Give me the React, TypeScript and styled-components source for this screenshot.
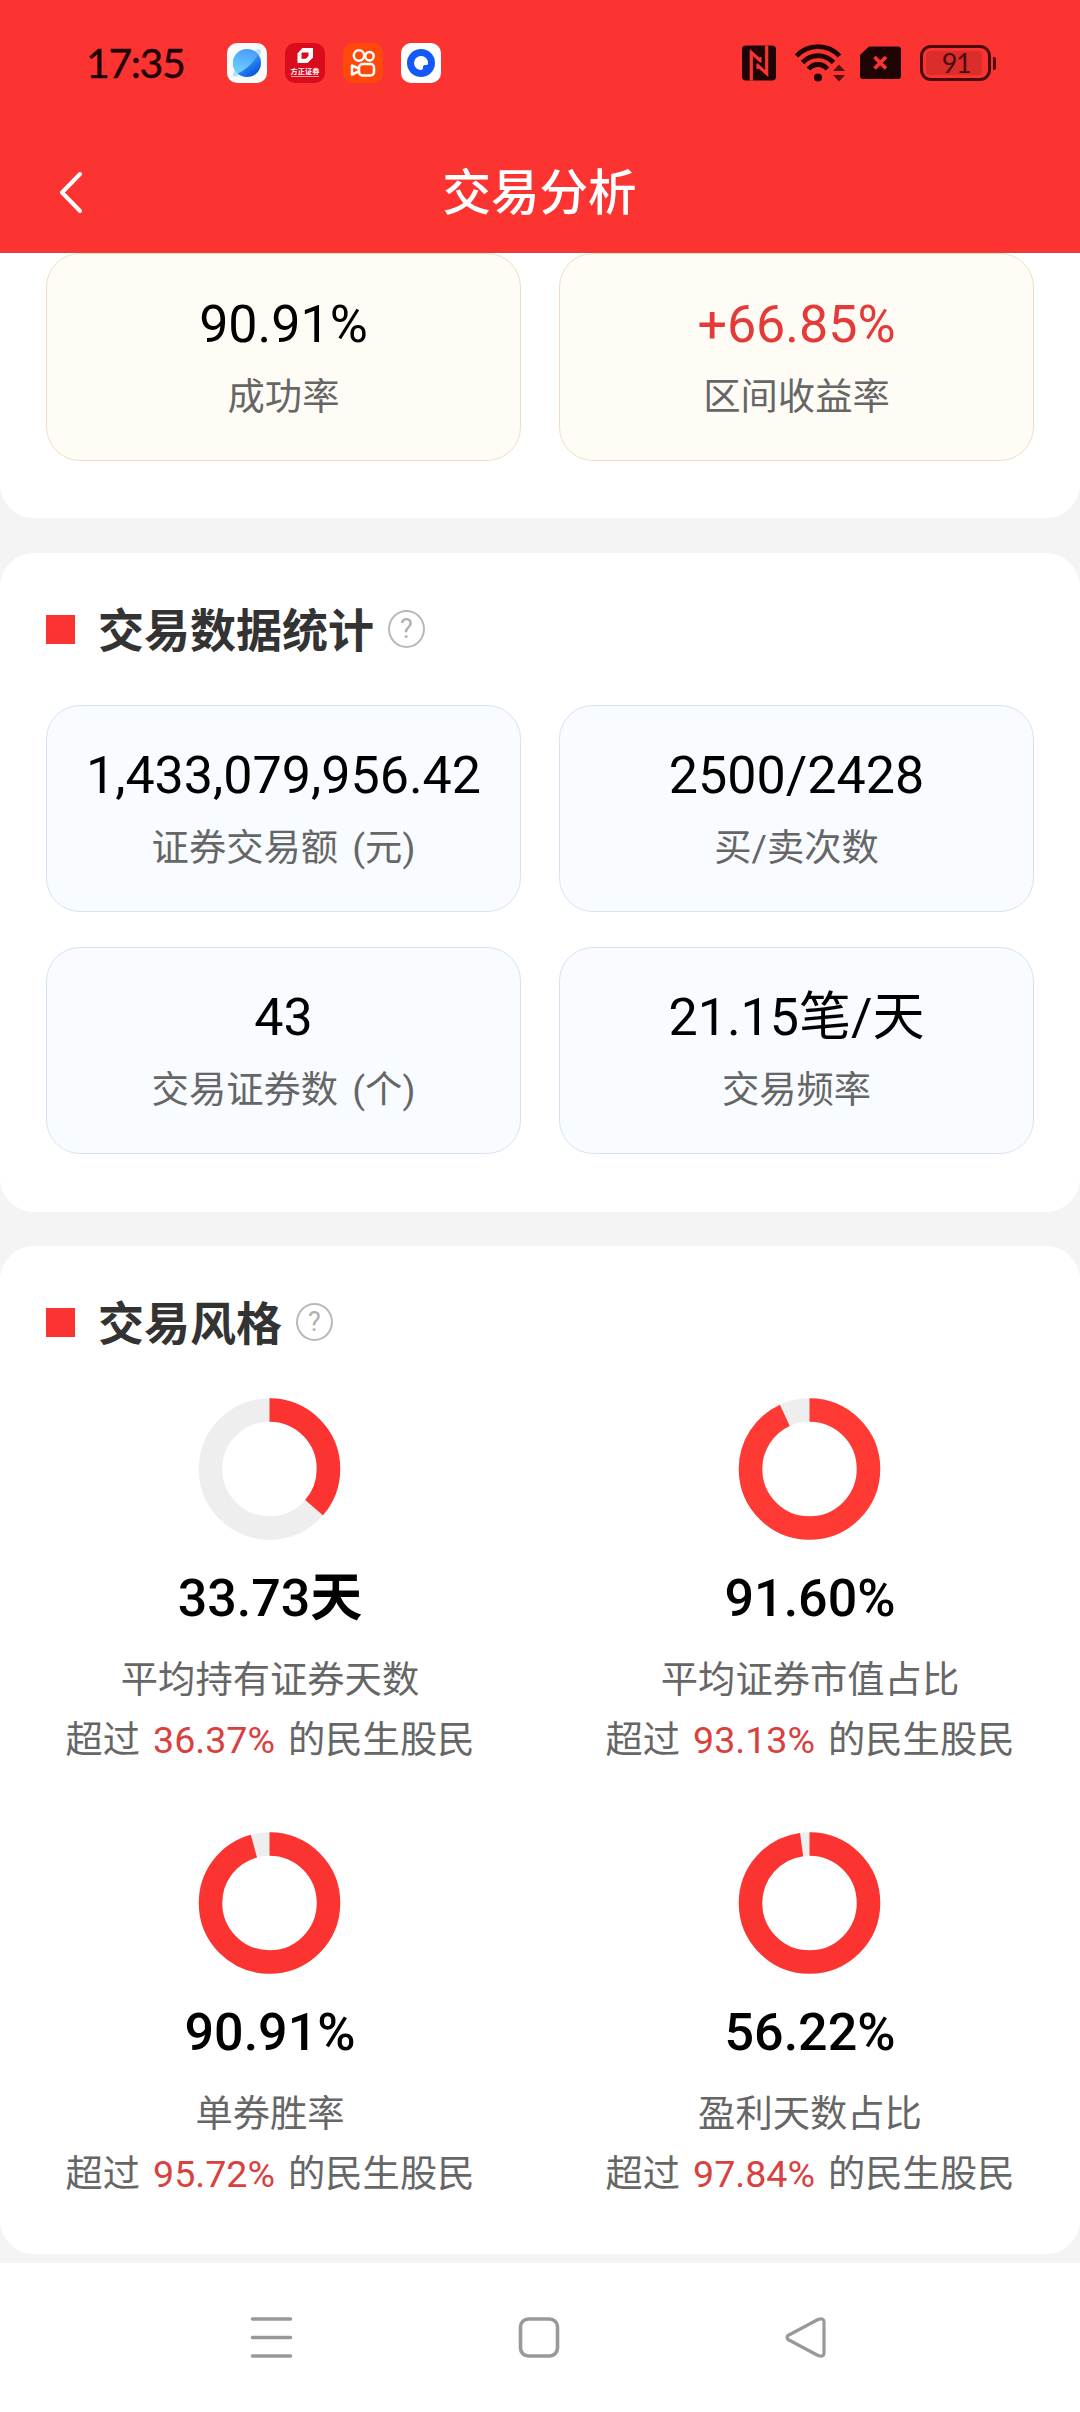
import React from "react";
import styled, { createGlobalStyle } from "styled-components";

const RED = "#fc3431";
const INK = "#1f0405";
const SANS = '"Roboto", "Noto Sans CJK SC", sans-serif';

const GlobalStyle = createGlobalStyle`
  * { box-sizing: border-box; }
  body { margin: 0; background: #f4f4f4; }
`;

const Screen = styled.div`
  width: 1080px;
  height: 2412px;
  overflow: hidden;
  display: flex;
  flex-direction: column;
  background: #f4f4f4;
  font-family: ${SANS};
  color: #000;
`;

const TopArea = styled.header`
  flex: none;
  height: 253px;
  background: ${RED};
  border-bottom: 1px solid #d8453f;
`;

const StatusBar = styled.div`
  height: 126px;
  padding: 0 84px 0 86px;
  display: flex;
  align-items: center;
  justify-content: space-between;
`;

const StatusGroup = styled.div<{ $gap: number }>`
  display: flex;
  align-items: center;
  gap: ${(p) => p.$gap}px;
`;

const Clock = styled.span`
  width: 123px;
  font-family: "Lato", "Noto Sans CJK SC", sans-serif;
  font-size: 41px;
  line-height: 48px;
  letter-spacing: -1.4px;
  white-space: nowrap;
  color: ${INK};
  -webkit-text-stroke: 0.4px ${INK};
`;

const AppIcon = styled.div<{ $bg: string }>`
  width: 40px;
  height: 40px;
  border-radius: 10px;
  overflow: hidden;
  background: ${(p) => p.$bg};
  display: flex;
  flex-direction: column;
  align-items: center;

  svg { display: block; flex: none; }
`;

const BrandText = styled.span`
  height: 9px;
  font-size: 7.2px;
  line-height: 9px;
  font-weight: 700;
  color: #fff;
  white-space: nowrap;
`;

const BrandLine = styled.span`
  width: 28px;
  height: 1px;
  background: #ee9a9f;
`;

const Glyph = styled.svg`
  display: block;
  flex: none;
  overflow: visible;
`;

const Battery = styled.div`
  display: flex;
  align-items: center;
  gap: 2px;
`;

const BatteryShell = styled.div`
  width: 71px;
  height: 36px;
  padding: 3px;
  border: 3px solid #470b0c;
  border-radius: 11px;
`;

const BatteryFill = styled.div`
  width: 56px;
  height: 24px;
  border-radius: 4px;
  background: #db2d2c;
  text-align: center;
  padding-left: 4px;
  font-family: "Lato", sans-serif;
  font-size: 27px;
  line-height: 24px;
  letter-spacing: -1.4px;
  color: #4a0b0c;
`;

const BatteryTip = styled.div`
  width: 3px;
  height: 13px;
  border-radius: 0 2px 2px 0;
  background: #470b0c;
`;

const NavBar = styled.div`
  height: 126px;
  display: grid;
  grid-template-columns: 140px 1fr 140px;
  align-items: center;
`;

const BackButton = styled.button`
  height: 80px;
  padding: 6px 0 0 57px;
  border: 0;
  background: none;
`;

const PageTitle = styled.h1`
  margin: 0;
  font-size: 48.5px;
  line-height: 64px;
  font-weight: 500;
  text-align: center;
  color: #fff;
  padding: 9px 1px 0 0;
`;

const Content = styled.main`
  flex: 1;
  min-height: 0;
  display: flex;
  flex-direction: column;
`;

const Panel = styled.section<{ $height: number; $first?: boolean; $gap: number }>`
  flex: none;
  height: ${(p) => p.$height}px;
  margin-bottom: ${(p) => p.$gap}px;
  padding: 0 46px;
  background: #fff;
  border-radius: ${(p) => (p.$first ? "0 0 34px 34px" : "34px")};
`;

const PanelHead = styled.div`
  height: 152px;
  display: flex;
  align-items: center;
`;

const Marker = styled.span`
  width: 29px;
  height: 29px;
  background: ${RED};
`;

const PanelTitle = styled.h2`
  margin: 4px 0 0 23px;
  font-size: 46px;
  line-height: 60px;
  font-weight: 700;
  color: #333;
`;

const HelpIcon = styled.button`
  width: 37px;
  height: 38px;
  margin-left: 14px;
  padding: 0;
  border: 2px solid #b9b9b9;
  border-radius: 50%;
  background: none;
  font-family: "Roboto", sans-serif;
  font-size: 27px;
  line-height: 34px;
  text-align: center;
  color: #b0b0b0;
`;

const StatGrid = styled.div`
  display: grid;
  grid-template-columns: 475px 475px;
  column-gap: 38px;
  row-gap: 35px;
`;

type Tone = "warm" | "cool";

const StatCard = styled.div<{ $tone: Tone }>`
  height: ${(p) => (p.$tone === "warm" ? 208 : 207)}px;
  padding-top: ${(p) => (p.$tone === "warm" ? 41 : 40)}px;
  border: 1px solid ${(p) => (p.$tone === "warm" ? "#f1dfc2" : "#d9e3ef")};
  border-radius: 34px;
  background: ${(p) => (p.$tone === "warm" ? "#fffcf6" : "#f8fbff")};
  text-align: center;
`;

const StatValue = styled.div<{ $accent?: boolean }>`
  font-size: 52px;
  line-height: 60px;
  white-space: nowrap;
  color: ${(p) => (p.$accent ? "#e33b39" : "#000")};
`;

const StatLabel = styled.div`
  margin-top: 18px;
  font-size: 37.3px;
  line-height: 48px;
  word-spacing: 5px;
  white-space: nowrap;
  color: #666;
`;

const StyleGrid = styled.div`
  margin: 0 -46px;
  display: grid;
  grid-template-columns: 1fr 1fr;
  grid-auto-rows: 434px;
`;

const StyleItem = styled.div`
  display: flex;
  flex-direction: column;
  align-items: center;
`;

const StyleValue = styled.div`
  margin-top: 29px;
  font-size: 52px;
  line-height: 60px;
  font-weight: 500;
`;

const StyleUnit = styled.span`
  font-weight: 700;
`;

const StyleLabel = styled.div`
  margin-top: 27px;
  font-size: 37.3px;
  line-height: 48px;
  color: #666;
`;

const Compare = styled.div`
  margin-top: 12px;
  display: flex;
  gap: 13px;
  font-size: 37.3px;
  line-height: 48px;
  color: #666;
`;

const Percent = styled.span`
  font-size: 37.6px;
  color: #d9413e;
`;

const SystemNav = styled.nav`
  flex: none;
  height: 149px;
  padding: 0 250px 0 251px;
  display: flex;
  align-items: center;
  justify-content: space-between;
  background: #fff;
`;

interface Stat {
  value: string;
  label: string;
  accent?: boolean;
}

const summary: Stat[] = [
  { value: "90.91%", label: "成功率" },
  { value: "+66.85%", label: "区间收益率", accent: true },
];

const tradeStats: Stat[] = [
  { value: "1,433,079,956.42", label: "证券交易额 (元)" },
  { value: "2500/2428", label: "买/卖次数" },
  { value: "43", label: "交易证券数 (个)" },
  { value: "21.15笔/天", label: "交易频率" },
];

const styles = [
  { value: "33.73", unit: "天", label: "平均持有证券天数", percent: 36.37, color: RED },
  { value: "91.60%", label: "平均证券市值占比", percent: 93.13, color: "#ff3a35" },
  { value: "90.91%", label: "单券胜率", percent: 95.72, color: RED },
  { value: "56.22%", label: "盈利天数占比", percent: 97.84, color: RED },
];

function Donut({ percent, color }: { percent: number; color: string }) {
  return (
    <Glyph width="142" height="142" viewBox="0 0 142 142">
      <g fill="none" strokeWidth="23.5" transform="rotate(-90 71 71)">
        <circle cx="71" cy="70.500" r="59" stroke="#eee" />
        <circle
          cx="71"
          cy="70.500"
          r="59"
          stroke={color}
          pathLength="100"
          strokeDasharray={`${percent} 100`}
        />
      </g>
    </Glyph>
  );
}

function Stats({ items, tone }: { items: Stat[]; tone: Tone }) {
  return (
    <StatGrid>
      {items.map((s) => (
        <StatCard key={s.label} $tone={tone}>
          <StatValue $accent={s.accent}>{s.value}</StatValue>
          <StatLabel>{s.label}</StatLabel>
        </StatCard>
      ))}
    </StatGrid>
  );
}

function Heading({ title }: { title: string }) {
  return (
    <PanelHead>
      <Marker />
      <PanelTitle>{title}</PanelTitle>
      <HelpIcon>?</HelpIcon>
    </PanelHead>
  );
}

function StatusIcons() {
  return (
    <StatusGroup $gap={18}>
      <AppIcon $bg="#f8fafc">
        <svg width="40" height="40" viewBox="0 0 40 40">
          <defs>
            <linearGradient id="planet" x1="0.2" y1="0.1" x2="0.8" y2="0.9">
              <stop offset="0" stopColor="#4aa5fb" />
              <stop offset="0.5" stopColor="#2f8cf8" />
              <stop offset="1" stopColor="#0a55e0" />
            </linearGradient>
            <linearGradient id="shine" x1="0.6" y1="0" x2="0.3" y2="1">
              <stop offset="0" stopColor="#4b9df8" />
              <stop offset="1" stopColor="#6ed2ff" />
            </linearGradient>
          </defs>
          <path d="M27 8C32 5 35 6 33.500 10C30 18 17 31 9 33.500C5 34.500 5 31 8 27Z" fill="#b5e3fd" />
          <circle cx="20" cy="20" r="14" fill="url(#planet)" />
          <path d="M31 11.500A14 14 0 1 0 10.500 30.500C19 27 27 19 31 11.500Z" fill="url(#shine)" />
        </svg>
      </AppIcon>
      <AppIcon $bg="#d90b1c">
        <svg width="40" height="24" viewBox="0 0 40 24">
          <path d="M17.500 5H28V14.500L22.500 20H12.500V10.500Z" fill="#fff" />
          <path d="M17 9.500H23.500V13L21 15.800H16.500V10.500Z" fill="#d90b1c" />
        </svg>
        <BrandText>方正证券</BrandText>
        <BrandLine />
      </AppIcon>
      <AppIcon $bg="#ff490b">
        <svg width="40" height="40" viewBox="0 0 40 40" fill="none" stroke="#fff" strokeWidth="2.500">
          <circle cx="16" cy="12.500" r="5.200" />
          <circle cx="26.500" cy="13.200" r="4.200" />
          <rect x="16" y="21" width="15" height="11.500" rx="3.500" />
          <path d="M15.500 25.500L9 22.500V31.500L15.500 28.500" strokeLinejoin="round" />
        </svg>
      </AppIcon>
      <AppIcon $bg="#fff">
        <svg width="40" height="40" viewBox="0 0 40 40">
          <circle cx="20" cy="20" r="14" fill="#1458fa" />
          <path d="M27 20.500A7 7 0 1 0 20.500 27A2 2 0 0 0 22 25V23.500A2 2 0 0 1 24 22H25.500Q27 22 27 20.500Z" fill="#fff" />
        </svg>
      </AppIcon>
    </StatusGroup>
  );
}

function SystemIcons() {
  return (
    <StatusGroup $gap={19}>
      <Glyph width="34" height="36" viewBox="0 0 34 36">
        <rect x="0" y="0.500" width="34" height="35" rx="4" fill={INK} />
        <path d="M9.300 35.500V7.500L18.500 15.700M24.700 0.500V28.500L15.500 20.300" fill="none" stroke={RED} strokeWidth="3.200" />
        <path d="M18.500 12V17.500M15.500 18.500V24" stroke={RED} strokeWidth="2" />
      </Glyph>
      <Glyph width="46" height="40" viewBox="0 0 46 40">
        <g fill="none" stroke={INK} strokeWidth="4.800">
          <path d="M1.500 13C13 0.500 33 0.500 44.500 13" />
          <path d="M7.500 19.500C16 10.500 30 10.500 38.500 19.500" />
          <path d="M13.500 26C19 20 27 20 32.500 26" />
        </g>
        <circle cx="23" cy="34.500" r="4" fill={INK} />
        <path d="M38 28L44 21.500L50 28ZM38 32L44 38.500L50 32Z" fill="#57100f" />
      </Glyph>
      <Glyph width="41" height="34" viewBox="0 0 41 34">
        <path d="M9 0.500H38Q41 0.500 41 3.500V30Q41 33 38 33H3Q0 33 0 30V9Z" fill={INK} />
        <path d="M14.500 11L26 22.500M26 11L14.500 22.500" stroke={RED} strokeWidth="3.800" />
      </Glyph>
      <Battery>
        <BatteryShell>
          <BatteryFill>91</BatteryFill>
        </BatteryShell>
        <BatteryTip />
      </Battery>
    </StatusGroup>
  );
}

export default function App() {
  return (
    <Screen>
      <GlobalStyle />
      <TopArea>
        <StatusBar>
          <StatusGroup $gap={18}>
            <Clock>17:35</Clock>
            <StatusIcons />
          </StatusGroup>
          <SystemIcons />
        </StatusBar>
        <NavBar>
          <BackButton aria-label="返回">
            <Glyph width="28" height="44" viewBox="0 0 28 44">
              <path d="M23 4L5 22.500L23 41" fill="none" stroke="#fff" strokeWidth="4" strokeLinecap="round" strokeLinejoin="round" />
            </Glyph>
          </BackButton>
          <PageTitle>交易分析</PageTitle>
        </NavBar>
      </TopArea>
      <Content>
        <Panel $height={265} $gap={35} $first>
          <Stats items={summary} tone="warm" />
        </Panel>
        <Panel $height={659} $gap={34}>
          <Heading title="交易数据统计" />
          <Stats items={tradeStats} tone="cool" />
        </Panel>
        <Panel $height={1008} $gap={0}>
          <Heading title="交易风格" />
          <StyleGrid>
            {styles.map((s) => (
              <StyleItem key={s.label}>
                <Donut percent={s.percent} color={s.color} />
                <StyleValue>
                  {s.value}
                  {s.unit && <StyleUnit>{s.unit}</StyleUnit>}
                </StyleValue>
                <StyleLabel>{s.label}</StyleLabel>
                <Compare>
                  <span>超过</span>
                  <Percent>{s.percent.toFixed(2)}%</Percent>
                  <span>的民生股民</span>
                </Compare>
              </StyleItem>
            ))}
          </StyleGrid>
        </Panel>
      </Content>
      <SystemNav>
        <Glyph width="41" height="41" viewBox="0 0 41 41">
          <path d="M1.500 2H39.500M1.500 20.500H39.500M1.500 39H39.500" stroke="#999" strokeWidth="3.600" strokeLinecap="round" />
        </Glyph>
        <Glyph width="41" height="41" viewBox="0 0 41 41">
          <rect x="2.500" y="2" width="37" height="37" rx="8" fill="none" stroke="#999" strokeWidth="3.600" />
        </Glyph>
        <Glyph width="45" height="41" viewBox="0 0 45 41">
          <path d="M3 18.500L33 2.500Q39 0.500 39 5V36Q39 40.500 33 38.500L3 22.500Q1 20.500 3 18.500Z" fill="none" stroke="#999" strokeWidth="3.200" strokeLinejoin="round" />
        </Glyph>
      </SystemNav>
    </Screen>
  );
}
